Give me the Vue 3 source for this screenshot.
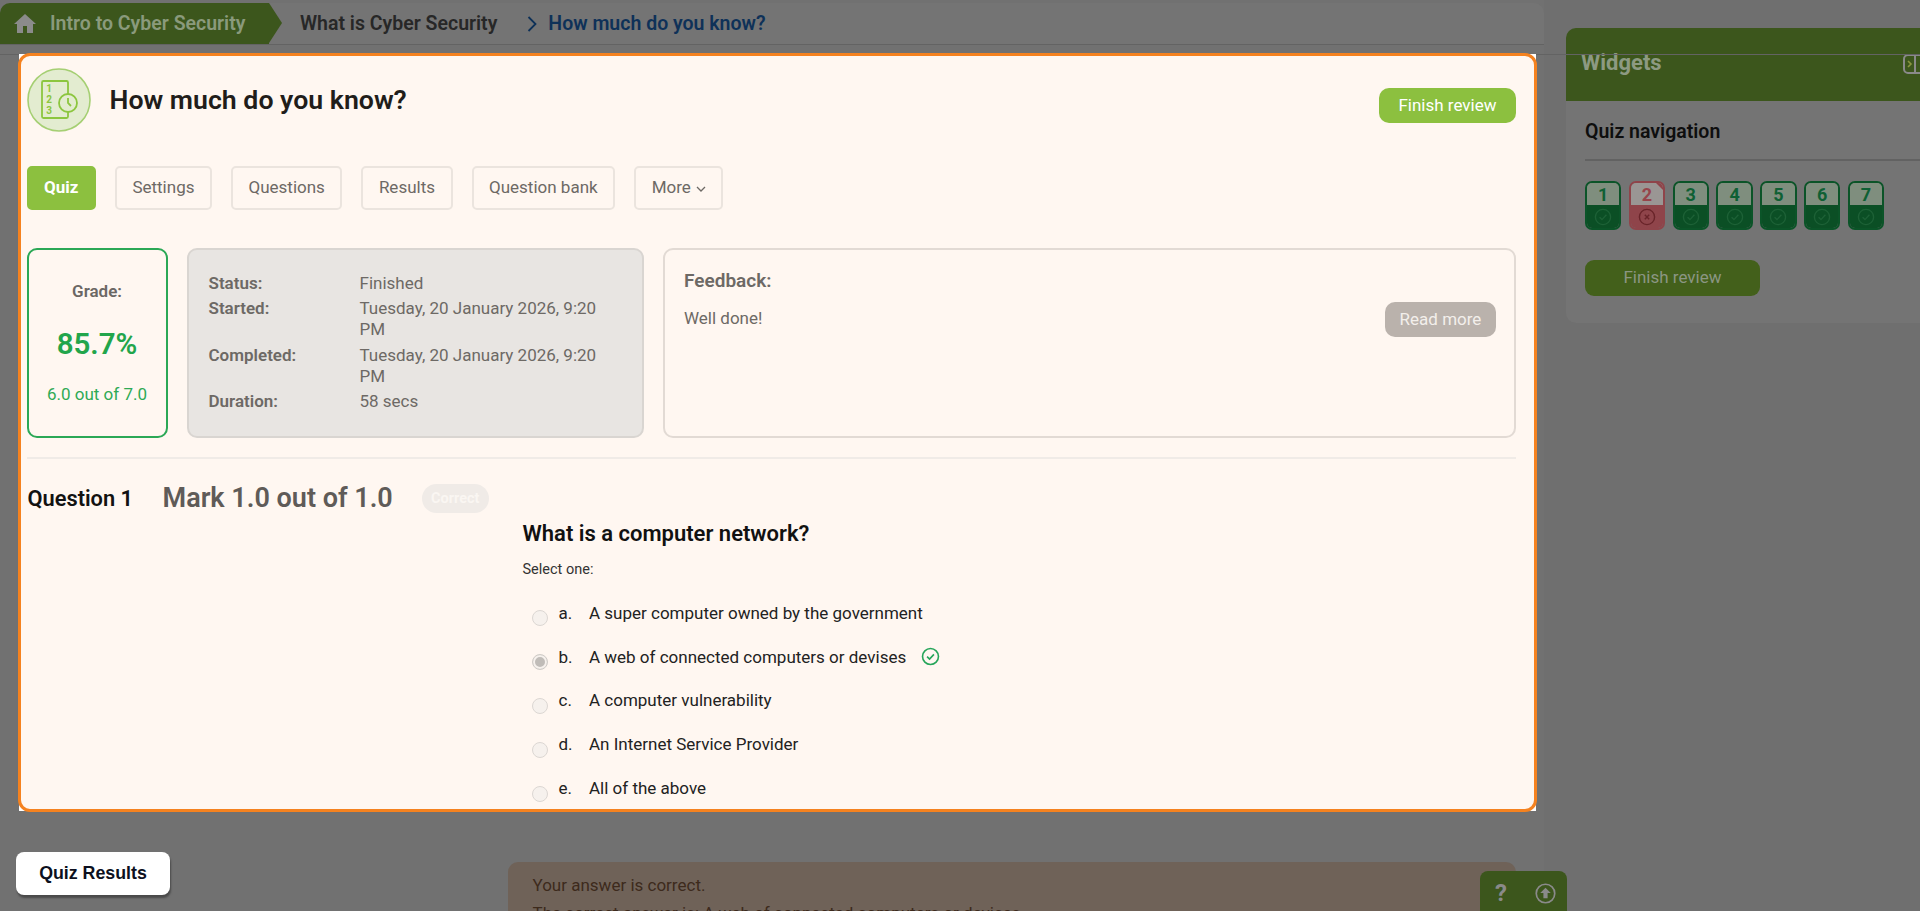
<template>
  <div class="page">
    <div class="main-col">
      <div class="crumbs">
        <a class="crumb-home">
          <svg class="home-icon" viewBox="0 0 24 24"><path d="M10 21v-7h4v7h6v-9h3L12 2 1 12h3v9z" /></svg>
          Intro to Cyber Security
        </a>
        <a class="crumb-mid">What is Cyber Security</a>
        <svg class="crumb-chevron" viewBox="0 0 10 16"><path d="M1.5 1l7 7-7 7" /></svg>
        <a class="crumb-current">How much do you know?</a>
      </div>
      <div class="answer-feedback">
        <p>Your answer is correct.</p>
        <p>The correct answer is: A web of connected computers or devices</p>
      </div>
    </div>

    <aside class="widgets">
      <div class="widgets-head">
        <span>Widgets</span>
        <svg class="collapse-icon" viewBox="0 0 24 24">
          <rect x="2" y="3" width="24" height="18" rx="4" />
          <path d="M13 3v18" />
          <path class="collapse-arrow" d="M6 9l3 3-3 3" />
        </svg>
      </div>
      <div class="widgets-body">
        <h3>Quiz navigation</h3>
        <div class="nav-tiles">
          <div v-for="n in navItems" :key="n.num" class="tile" :class="{ wrong: !n.ok }">
            <div class="tile-num">{{ n.num }}</div>
            <div class="tile-state">
              <svg viewBox="0 0 20 20">
                <circle cx="10" cy="10" r="7.6" />
                <path v-if="n.ok" d="M6.6 10.2l2.4 2.4 4.4-4.8" />
                <path v-else d="M7.8 7.8l4.4 4.4M12.2 7.8l-4.4 4.4" />
              </svg>
            </div>
          </div>
        </div>
        <a class="nav-finish">Finish review</a>
      </div>
    </aside>

    <div class="line-across"></div>

    <!-- tour spotlight, sits above the dimmed page -->
    <div class="spot">
      <section class="card">
        <header class="card-head">
          <svg class="quiz-icon" viewBox="0 0 64 64">
            <circle class="ring" cx="32" cy="32" r="31" />
            <rect class="sheet" x="15" y="13" width="26" height="37" rx="1.5" />
            <text x="22" y="24">1</text>
            <text x="22" y="35">2</text>
            <text x="22" y="46">3</text>
            <circle class="clock" cx="41" cy="35" r="9" />
            <path class="sheet" d="M41 30v5l3 3" />
          </svg>
          <h1>How much do you know?</h1>
          <a class="btn-finish">Finish review</a>
        </header>

        <nav class="tabs">
          <a v-for="t in tabs" :key="t" class="tab" :class="{ active: t === 'Quiz' }">
            {{ t }}
            <svg v-if="t === 'More'" class="tab-caret" viewBox="0 0 10 6"><path d="M1 1l4 4 4-4" /></svg>
          </a>
        </nav>

        <div class="summary">
          <div class="grade-box">
            <div class="grade-label">Grade:</div>
            <div class="grade-pct">85.7%</div>
            <div class="grade-pts">6.0 out of 7.0</div>
          </div>
          <div class="status-box">
            <div v-for="r in statusRows" :key="r.label" class="status-row">
              <b>{{ r.label }}</b>
              <span>{{ r.value }}</span>
            </div>
          </div>
          <div class="feedback-box">
            <h4>Feedback:</h4>
            <div class="feedback-row">
              <span>Well done!</span>
              <a class="btn-more">Read more</a>
            </div>
          </div>
        </div>

        <div class="question-head">
          <span class="q-no">Question 1</span>
          <span class="q-mark">Mark 1.0 out of 1.0</span>
          <span class="q-badge">Correct</span>
        </div>

        <div class="question">
          <h2>What is a computer network?</h2>
          <div class="select-one">Select one:</div>
          <div v-for="o in options" :key="o.key" class="option">
            <span class="radio" :class="{ on: o.picked }"></span>
            <span class="opt-key">{{ o.key }}.</span>
            <span>{{ o.text }}</span>
            <svg v-if="o.picked" class="opt-check" viewBox="0 0 20 20">
              <circle cx="10" cy="10" r="8.4" />
              <path d="M6.4 10.2l2.6 2.6 4.6-5" />
            </svg>
          </div>
        </div>
      </section>
    </div>

    <a class="quiz-results">Quiz Results</a>

    <div class="help-tab">
      <span class="help-q">?</span>
      <svg class="up-icon" viewBox="0 0 20 20">
        <circle cx="10" cy="10" r="8.8" />
        <path class="arrow" d="M10 4.6l5 5h-3v5h-4v-5h-3z" />
      </svg>
    </div>
  </div>
</template>

<script setup>
const tabs = ['Quiz', 'Settings', 'Questions', 'Results', 'Question bank', 'More'];

const statusRows = [
  { label: 'Status:', value: 'Finished' },
  { label: 'Started:', value: 'Tuesday, 20 January 2026, 9:20 PM' },
  { label: 'Completed:', value: 'Tuesday, 20 January 2026, 9:20 PM' },
  { label: 'Duration:', value: '58 secs' }
];

const options = [
  { key: 'a', text: 'A super computer owned by the government' },
  { key: 'b', text: 'A web of connected computers or devises', picked: true },
  { key: 'c', text: 'A computer vulnerability' },
  { key: 'd', text: 'An Internet Service Provider' },
  { key: 'e', text: 'All of the above' }
];

const navItems = [
  { num: 1, ok: true },
  { num: 2, ok: false },
  { num: 3, ok: true },
  { num: 4, ok: true },
  { num: 5, ok: true },
  { num: 6, ok: true },
  { num: 7, ok: true }
];
</script>

<style>
html,
body {
  margin: 0;
  background: #6f6f6f;
  overflow: hidden;
}
</style>

<style scoped>
.page {
  position: relative;
  display: flex;
  height: 911px;
  overflow: hidden;
  font-family: Roboto, "Liberation Sans", sans-serif;
  background: #6f6f6f;
}

/* dimmed page */
.main-col {
  width: 1544px;
  flex-shrink: 0;
  padding-top: 3px;
  background: #717171;
}

.crumbs {
  display: flex;
  align-items: center;
  height: 41px;
  background: #747474;
  border-bottom: 1px solid #636363;
  border-radius: 10px 10px 0 0;
  font-size: 19.5px;
  font-weight: 600;
}

.crumb-home {
  display: flex;
  align-items: center;
  gap: 13px;
  width: 269px;
  height: 100%;
  box-sizing: border-box;
  padding-left: 13px;
  position: relative;
  color: #8a9a7c;
  background: #3c561c;
  border-radius: 10px 0 0 0;
}

.crumb-home::after {
  content: "";
  position: absolute;
  left: 100%;
  top: 0;
  border-left: 13px solid #3c561c;
  border-top: 20.5px solid transparent;
  border-bottom: 20.5px solid transparent;
}

.home-icon {
  width: 24px;
  height: 24px;
  fill: #8b8b8b;
}

.crumb-mid {
  margin-left: 31px;
  color: #272727;
}

.crumb-chevron {
  width: 10px;
  height: 16px;
  margin-left: 30px;
  fill: none;
  stroke: #0e3158;
  stroke-width: 1.8;
}

.crumb-current {
  margin-left: 11px;
  color: #0e3158;
}

.answer-feedback {
  margin: 817px 28px 0 508px;
  padding: 14px 24.5px;
  height: 80px;
  border-radius: 10px;
  background: #6f6258;
  color: #3d2a1c;
  font-size: 17px;
}

.answer-feedback p {
  margin: 0 0 9px;
  line-height: 19px;
}

.widgets {
  width: 354px;
  margin: 28px 0 0 22px;
  flex-shrink: 0;
  align-self: flex-start;
}

.widgets-head {
  display: flex;
  align-items: center;
  justify-content: space-between;
  height: 73px;
  box-sizing: border-box;
  padding: 0 0 4px 15px;
  background: #3c561c;
  border-radius: 10px 0 0 0;
  color: #8d9a82;
  font-size: 22px;
  font-weight: 700;
}

.collapse-icon {
  width: 24px;
  height: 24px;
  margin: 2px -6px 0 0;
  fill: none;
  stroke: #8a8a8a;
  stroke-width: 2;
  overflow: visible;
}

.collapse-arrow {
  stroke: #8a9440;
  stroke-width: 1.6;
}

.widgets-body {
  height: 222px;
  box-sizing: border-box;
  padding: 19px 0 0 19px;
  background: #747474;
  border-radius: 0 0 0 10px;
}

.widgets-body h3 {
  margin: 0;
  padding-bottom: 16px;
  border-bottom: 2px solid #626262;
  font-size: 19.5px;
  font-weight: 600;
  line-height: 23px;
  color: #0e0e0e;
}

.nav-tiles {
  display: flex;
  gap: 7.4px;
  margin-top: 20px;
}

.tile {
  width: 36.4px;
  height: 49px;
  box-sizing: border-box;
  border: 2px solid #0b5428;
  border-radius: 7px;
  overflow: hidden;
  position: relative;
}

.tile-num {
  height: 22px;
  background: #7f8e7e;
  color: #0f6034;
  font-size: 18px;
  font-weight: 700;
  line-height: 24px;
  text-align: center;
}

.tile-state {
  height: 23px;
  display: flex;
  align-items: center;
  justify-content: center;
  background: #0b4f25;
}

.tile-state svg {
  width: 20px;
  height: 20px;
  fill: none;
  stroke: #1d6136;
  stroke-width: 1.4;
}

.tile.wrong {
  border-color: #8f444a;
}

.tile.wrong .tile-num {
  background: #9a9694;
  color: #97444b;
}

.tile.wrong .tile-state {
  background: #8f444a;
}

.tile.wrong .tile-state svg {
  stroke: #692429;
}

.tile.wrong::after {
  content: "";
  position: absolute;
  top: -2px;
  right: -2px;
  border-top: 11px solid #8f444a;
  border-left: 11px solid transparent;
}

.nav-finish {
  display: block;
  width: 175px;
  height: 36px;
  margin-top: 30px;
  border-radius: 9px;
  background: #43601b;
  color: #8b9683;
  font-size: 17px;
  line-height: 34px;
  text-align: center;
}

.line-across {
  position: absolute;
  left: 0;
  right: 0;
  top: 54px;
  height: 1px;
  background: #636363;
}

/* spotlight card */
.spot {
  position: absolute;
  left: 19px;
  top: 54px;
  width: 1517px;
  height: 757px;
  background: #fff;
}

.card {
  height: 759px;
  width: 1519px;
  margin: -1px;
  box-sizing: border-box;
  border: 3px solid #f5821f;
  border-radius: 12px;
  background: #fff7f1;
  overflow: hidden;
  padding: 0 18px 0 5.5px;
  color: #222;
}

.card-head {
  display: flex;
  align-items: center;
  height: 64px;
  margin-top: 12px;
}

.quiz-icon {
  width: 64px;
  height: 64px;
  flex-shrink: 0;
}

.quiz-icon .ring {
  fill: #e3ecd0;
  stroke: #a5cf73;
  stroke-width: 1.6;
}

.quiz-icon .sheet {
  fill: none;
  stroke: #8cc63f;
  stroke-width: 1.8;
}

.quiz-icon .clock {
  fill: #e3ecd0;
  stroke: #8cc63f;
  stroke-width: 1.8;
}

.quiz-icon text {
  fill: #8cc63f;
  font-size: 10px;
  font-weight: 700;
  text-anchor: middle;
}

.card-head h1 {
  margin: 0 0 0 19px;
  font-size: 26.7px;
  font-weight: 600;
  color: #211d1a;
}

.btn-finish {
  margin: 10px 0 0 auto;
  width: 137px;
  height: 35px;
  border-radius: 10px;
  background: #8cc03f;
  color: #fff;
  font-size: 17px;
  line-height: 34px;
  text-align: center;
}

.tabs {
  display: flex;
  gap: 19px;
  margin-top: 34px;
}

.tab {
  display: flex;
  align-items: center;
  gap: 5px;
  height: 44px;
  box-sizing: border-box;
  padding: 0 15.5px 2px;
  border: 2px solid #ebe4de;
  border-radius: 5px;
  color: #6d6965;
  font-size: 17px;
}

.tab.active {
  border-color: #8cc03f;
  background: #8cc03f;
  color: #fff;
  font-weight: 700;
}

.tab-caret {
  width: 10px;
  height: 6px;
  margin-top: 3px;
  fill: none;
  stroke: #6d6965;
  stroke-width: 1.3;
}

.summary {
  display: flex;
  gap: 19.5px;
  height: 189px;
  margin-top: 38px;
  padding-bottom: 20px;
  border-bottom: 2px solid #f0ebe7;
}

.grade-box {
  width: 141px;
  height: 190px;
  box-sizing: border-box;
  flex-shrink: 0;
  padding-top: 31px;
  border: 2px solid #2ba856;
  border-radius: 10px;
  text-align: center;
}

.grade-label {
  color: #6b6764;
  font-size: 17px;
  font-weight: 600;
  line-height: 20px;
}

.grade-pct {
  margin-top: 25px;
  color: #22a54b;
  font-size: 29.5px;
  font-weight: 600;
  line-height: 36px;
}

.grade-pts {
  margin-top: 22px;
  color: #2eaa55;
  font-size: 17px;
  line-height: 20px;
}

.status-box {
  width: 456.5px;
  height: 190px;
  flex-shrink: 0;
  box-sizing: border-box;
  padding: 23px 19.5px;
  background: #e8e5e2;
  border: 2px solid #d9d5d1;
  border-radius: 10px;
  font-size: 17px;
  line-height: 21px;
  color: #6d6965;
}

.status-row {
  display: grid;
  grid-template-columns: 151px 245px;
  margin-bottom: 4.3px;
}

.status-row b {
  font-weight: 600;
}

.feedback-box {
  flex: 1;
  height: 190px;
  box-sizing: border-box;
  padding: 19px 18px 0 19px;
  border: 2px solid #e2dad4;
  border-radius: 10px;
  color: #6d6965;
}

.feedback-box h4 {
  margin: 0;
  font-size: 19px;
  font-weight: 600;
  line-height: 24px;
}

.feedback-row {
  display: flex;
  align-items: flex-start;
  justify-content: space-between;
  margin-top: 8px;
  font-size: 17px;
  line-height: 20px;
}

.feedback-row span {
  padding-top: 7px;
}

.btn-more {
  width: 111px;
  height: 35px;
  margin-top: 1px;
  border-radius: 10px;
  background: #bab2ac;
  color: #f3efeb;
  line-height: 34px;
  text-align: center;
}

.question-head {
  display: flex;
  align-items: center;
  height: 30px;
  margin: 24px 0 0 1px;
}

.q-no {
  width: 135px;
  font-size: 21.8px;
  font-weight: 600;
  color: #121212;
}

.q-mark {
  font-size: 27px;
  font-weight: 600;
  color: #5f5b58;
}

.q-badge {
  margin-left: 29px;
  width: 67px;
  height: 29px;
  border-radius: 15px;
  background: #f0ebe7;
  color: #faf6f2;
  font-size: 14.5px;
  font-weight: 700;
  line-height: 29px;
  text-align: center;
}

.question {
  margin: 7px 0 0 496px;
}

.question h2 {
  margin: 0;
  font-size: 22px;
  font-weight: 600;
  line-height: 28px;
  color: #111;
}

.select-one {
  margin-top: 12px;
  font-size: 14.5px;
  line-height: 20px;
  color: #333;
}

.option {
  display: flex;
  align-items: center;
  height: 43.8px;
  margin-left: 9.5px;
  font-size: 17px;
  color: #222;
  position: relative;
}

.select-one + .option {
  margin-top: 11px;
}

.radio {
  width: 16px;
  height: 16px;
  box-sizing: border-box;
  margin: 11px 10.5px 0 0;
  border: 1px solid #dcd7d3;
  border-radius: 50%;
  background: #f6f1ed;
  flex-shrink: 0;
}

.radio.on {
  border-color: #cfcbc7;
  box-shadow: inset 0 0 0 2px #f6f1ed, inset 0 0 0 8px #c0bcb8;
}

.opt-key {
  width: 30.5px;
  flex-shrink: 0;
}

.opt-check {
  width: 19px;
  height: 19px;
  margin-left: 15px;
  fill: none;
  stroke: #26a55a;
  stroke-width: 1.7;
}

/* fixed bits at the bottom */
.quiz-results {
  position: absolute;
  left: 16px;
  top: 852px;
  width: 154px;
  height: 43px;
  border-radius: 8px;
  background: #fff;
  box-shadow: 1px 3px 2px #4a4a4a;
  font-family: "Liberation Sans", Arial, sans-serif;
  font-size: 17.8px;
  font-weight: 700;
  line-height: 42px;
  text-align: center;
  color: #0c1020;
}

.help-tab {
  position: absolute;
  left: 1480px;
  top: 871px;
  width: 87px;
  height: 50px;
  display: flex;
  gap: 28px;
  padding: 8px 0 0 15px;
  box-sizing: border-box;
  background: #3c561c;
  border-radius: 8px 8px 0 0;
}

.help-q {
  color: #8a8a8a;
  font-size: 24px;
  font-weight: 700;
  line-height: 28px;
}

.up-icon {
  width: 21px;
  height: 21px;
  margin-top: 4px;
  fill: none;
  stroke: #8a8a8a;
  stroke-width: 1.6;
}

.up-icon .arrow {
  fill: #8a8a8a;
  stroke: none;
}
</style>
